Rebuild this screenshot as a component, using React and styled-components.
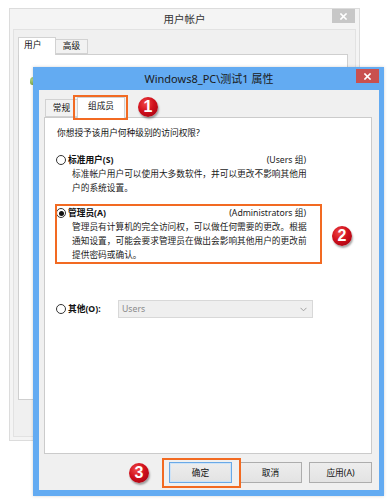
import React from "react";
import styled, { createGlobalStyle } from "styled-components";

const Global = createGlobalStyle`
  html, body { margin: 0; padding: 0; background: #fff; }
  * { box-sizing: border-box; }
`;

const FONT = `"Noto Sans", "Noto Sans CJK SC", sans-serif`;

const Stage = styled.div`
  position: relative;
  width: 387px;
  height: 500px;
  background: #fff;
  overflow: hidden;
  font-family: ${FONT};
  color: #111;
`;

/* ---------- back window ---------- */
const BackWindow = styled.div`
  position: absolute;
  left: 9px;
  top: 8px;
  width: 351px;
  height: 433px;
  border: 1px solid #dcdcdc;
  background: #f4f4f4;
  display: flex;
  flex-direction: column;
`;

const TitleBar = styled.div`
  height: ${(p) => p.$h}px;
  display: grid;
  grid-template-columns: 1fr auto 1fr;
  align-items: center;
  flex: none;
`;

const TitleText = styled.div`
  grid-column: 2;
  font-size: ${(p) => p.$size}px;
  color: ${(p) => p.$color};
  line-height: 1;
  white-space: nowrap;
`;

const CloseBtn = styled.div`
  grid-column: 3;
  justify-self: end;
  align-self: start;
  margin-top: ${(p) => p.$top}px;
  margin-right: ${(p) => p.$right}px;
  width: 23px;
  height: 14px;
  background: ${(p) => p.$bg};
  display: flex;
  align-items: center;
  justify-content: center;
`;

const BackFrame = styled.div`
  flex: 1;
  margin: 0 3px 3px 3px;
  border: 1px solid #e2e2e2;
  background: #f0f0f0;
  padding: 7px 7px 36px 4px;
  display: flex;
  flex-direction: column;
`;

const TabStrip = styled.div`
  height: ${(p) => p.$h}px;
  display: flex;
  align-items: flex-end;
  padding-left: ${(p) => p.$pl}px;
  position: relative;
  z-index: 1;
  flex: none;
`;

const Tab = styled.div`
  width: ${(p) => p.$w}px;
  height: ${(p) => (p.$active ? p.$hA : p.$hI)}px;
  margin-left: ${(p) => p.$ml || 0}px;
  margin-bottom: ${(p) => (p.$active ? -1 : 0)}px;
  border: 1px solid #d2d2d2;
  border-bottom: ${(p) => (p.$active ? "none" : "1px solid #d2d2d2")};
  background: ${(p) => (p.$active ? "#fff" : "#f2f2f2")};
  font-size: 8.7px;
  line-height: 1;
  display: flex;
  align-items: center;
  justify-content: ${(p) => (p.$left ? "flex-start" : "center")};
  padding-left: ${(p) => (p.$left ? 5 : 0)}px;
  padding-bottom: ${(p) => (p.$active ? 3 : 0)}px;
  position: relative;
  z-index: ${(p) => (p.$active ? 2 : 1)};
  color: #111;
`;

const BackPanel = styled.div`
  flex: 1;
  background: #fff;
  border: 1px solid #cfcfcf;
  padding: 22px 0 0 11px;
`;

const UserIcon = styled.div`
  width: 7px;
  height: 8px;
  border-radius: 50% 50% 30% 30%;
  background: radial-gradient(circle at 40% 35%, #b7d98a, #6f9a3c);
`;

/* ---------- front window ---------- */
const FrontWindow = styled.div`
  position: absolute;
  left: 33px;
  top: 67px;
  width: 351px;
  height: 429px;
  background: #63abf2;
  padding: 0 5px 6px 6px;
  display: flex;
  flex-direction: column;
  box-shadow: 0 0 3px rgba(0, 0, 0, 0.18);
`;

const FrontBody = styled.div`
  flex: 1;
  background: #f0f0f0;
  padding: 0 7px 0 5px;
  display: flex;
  flex-direction: column;
`;

const Panel = styled.div`
  flex: 1;
  background: #fff;
  border: 1px solid #cbcbcb;
  padding: 8px 0 0 11px;
  display: flex;
  flex-direction: column;
  font-size: 8.7px;
  line-height: 14px;
`;

const Question = styled.div`
  margin-left: 1px;
  height: 14px;
`;

const OptionRow = styled.div`
  margin-top: ${(p) => p.$mt}px;
  width: ${(p) => p.$w || 250}px;
  height: ${(p) => p.$h || 14}px;
  display: flex;
  align-items: center;
`;

const Radio = styled.div`
  width: 10px;
  height: 10px;
  border-radius: 50%;
  border: 1px solid #333;
  background: #fff;
  margin-right: 2px;
  display: flex;
  align-items: center;
  justify-content: center;
  flex: none;
  &::after {
    content: "";
    display: ${(p) => (p.$checked ? "block" : "none")};
    width: 5px;
    height: 5px;
    border-radius: 50%;
    background: #111;
  }
`;

const OptionLabel = styled.span`
  font-weight: 700;
  width: ${(p) => (p.$w ? `${p.$w}px` : "auto")};
  flex: none;
`;

const GroupName = styled.span`
  margin-left: auto;
  color: #222;
`;

const Desc = styled.div`
  margin-left: 16px;
  width: 27.3em;
  color: #1a1a1a;
`;

const Select = styled.div`
  width: 195px;
  height: 18px;
  background: #efefef;
  border: 1px solid #d8d8d8;
  display: flex;
  align-items: center;
  justify-content: space-between;
  padding: 0 5px 0 3px;
  color: #8a8a8a;
`;

const ButtonRow = styled.div`
  height: 36px;
  display: flex;
  justify-content: flex-end;
  align-items: center;
  gap: 7px;
  padding-top: 1px;
  flex: none;
`;

const Button = styled.div`
  width: 63px;
  height: 21px;
  border: 1px solid ${(p) => (p.$default ? "#6aa9e6" : "#adadad")};
  box-shadow: ${(p) => (p.$default ? "inset 0 0 0 1px #cde3f8" : "none")};
  background: linear-gradient(#ededed, #e3e3e3);
  font-size: 8.7px;
  display: flex;
  align-items: center;
  justify-content: center;
  color: #111;
`;

/* ---------- annotations ---------- */
const Marker = styled.div`
  position: absolute;
  left: ${(p) => p.$x}px;
  top: ${(p) => p.$y}px;
  width: ${(p) => p.$w}px;
  height: ${(p) => p.$h}px;
  border: 2px solid #f26a22;
  z-index: 10;
  pointer-events: none;
`;

const Badge = styled.div`
  position: absolute;
  left: ${(p) => p.$x}px;
  top: ${(p) => p.$y}px;
  width: 20px;
  height: 20px;
  border-radius: 50%;
  background: radial-gradient(circle at 38% 32%, #f04848 0%, #d0101c 45%, #9a0010 100%);
  box-shadow: 1px 2px 2px rgba(0, 0, 0, 0.35);
  color: #fff;
  font-family: "Liberation Sans", Arial, sans-serif;
  font-weight: 700;
  font-size: 16px;
  line-height: 20px;
  text-align: center;
  z-index: 11;
`;

const X = ({ color = "#fff" }) => (
  <svg width="7" height="7" viewBox="0 0 7 7">
    <path d="M1 1 L6 6 M6 1 L1 6" stroke={color} strokeWidth="1.6" strokeLinecap="square" />
  </svg>
);

const Chevron = () => (
  <svg width="7" height="5" viewBox="0 0 7 5">
    <path d="M0.5 0.8 L3.5 3.8 L6.5 0.8" stroke="#a0a0a0" strokeWidth="1" fill="none" />
  </svg>
);

export default function App() {
  return (
    <Stage>
      <Global />
      <BackWindow>
        <TitleBar $h={20}>
          <TitleText $size={10.5} $color="#333">用户帐户</TitleText>
          <CloseBtn $bg="#c7c7c7" $top={0} $right={4}>
            <X />
          </CloseBtn>
        </TitleBar>
        <BackFrame>
          <TabStrip $h={17} $pl={0}>
            <Tab $w={38} $hA={18} $hI={15} $active $left>用户</Tab>
            <Tab $w={33} $hA={18} $hI={15} $ml={-1}>高级</Tab>
          </TabStrip>
          <BackPanel>
            <UserIcon />
          </BackPanel>
        </BackFrame>
      </BackWindow>

      <FrontWindow>
        <TitleBar $h={23}>
          <TitleText $size={11} $color="#1a1a1a">Windows8_PC\测试1 属性</TitleText>
          <CloseBtn $bg="#c9504f" $top={2} $right={0}>
            <X />
          </CloseBtn>
        </TitleBar>
        <FrontBody>
          <TabStrip $h={27} $pl={1}>
            <Tab $w={33} $hA={20} $hI={18}>常规</Tab>
            <Tab $w={48} $hA={21} $hI={18} $ml={-1} $active>组成员</Tab>
          </TabStrip>
          <Panel>
            <Question>你想授予该用户何种级别的访问权限?</Question>

            <OptionRow $mt={13}>
              <Radio />
              <OptionLabel>标准用户(S)</OptionLabel>
              <GroupName>(Users 组)</GroupName>
            </OptionRow>
            <Desc>标准帐户用户可以使用大多数软件，并可以更改不影响其他用户的系统设置。</Desc>

            <OptionRow $mt={11}>
              <Radio $checked />
              <OptionLabel>管理员(A)</OptionLabel>
              <GroupName>(Administrators 组)</GroupName>
            </OptionRow>
            <Desc>管理员有计算机的完全访问权，可以做任何需要的更改。根据通知设置，可能会要求管理员在做出会影响其他用户的更改前提供密码或确认。</Desc>

            <OptionRow $mt={38} $h={18} $w={262}>
              <Radio />
              <OptionLabel $w={50}>其他(O):</OptionLabel>
              <Select>
                <span>Users</span>
                <Chevron />
              </Select>
            </OptionRow>
          </Panel>
          <ButtonRow>
            <Button $default>确定</Button>
            <Button>取消</Button>
            <Button>应用(A)</Button>
          </ButtonRow>
        </FrontBody>
      </FrontWindow>

      <Marker $x={73} $y={95} $w={55} $h={25} />
      <Marker $x={55} $y={204} $w={267} $h={60} />
      <Marker $x={162} $y={458} $w={79} $h={30} />
      <Badge $x={138} $y={97}>1</Badge>
      <Badge $x={332} $y={226}>2</Badge>
      <Badge $x={129} $y={463}>3</Badge>
    </Stage>
  );
}
